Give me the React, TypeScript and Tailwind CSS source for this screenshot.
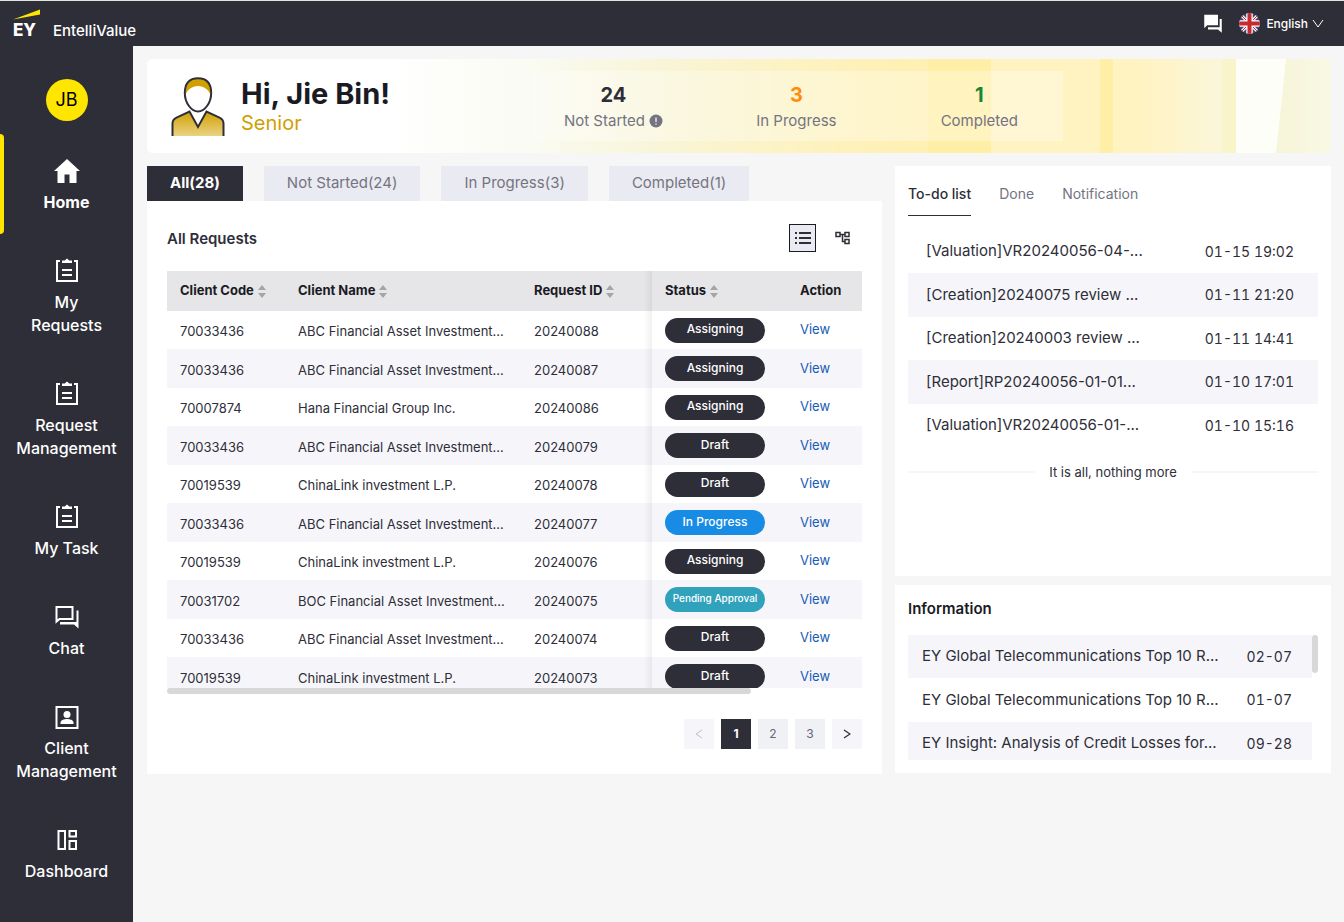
import React from "react";

type IconProps = { className?: string };

const HomeIcon = ({ className }: IconProps) => (
  <svg viewBox="0 0 26 26" className={className} fill="currentColor" aria-hidden="true">
    <path d="M13 1 26 13h-3.500v12h-7v-8.500h-5V25h-7V13H0z" />
  </svg>
);

const ClipboardIcon = ({ className }: IconProps) => (
  <svg viewBox="0 0 26 26" className={className} fill="none" stroke="currentColor" strokeWidth="2" aria-hidden="true">
    <path d="M6 3H3v20h20V3h-3" />
    <path d="M8 5V2.500h2.700L13 .5l2.300 2H18V5z" fill="currentColor" stroke="none" />
    <path d="M8 12h10M8 17h10" />
  </svg>
);

const ChatOutlineIcon = ({ className }: IconProps) => (
  <svg viewBox="0 0 26 26" className={className} fill="none" stroke="currentColor" strokeWidth="2" aria-hidden="true">
    <path d="M2.500 3h16v12H5.500l-3 2.500z" />
    <path d="M22.500 6.500h2V24.500l-4.500-4H6v-2.500h16.500z" fill="currentColor" stroke="none" />
  </svg>
);

const ClientIcon = ({ className }: IconProps) => (
  <svg viewBox="0 0 26 26" className={className} fill="none" stroke="currentColor" strokeWidth="2" aria-hidden="true">
    <path d="M2.500 3h21v21h-21z" />
    <circle cx="13" cy="10.500" r="3.500" fill="currentColor" stroke="none" />
    <path d="M6.500 20v-1.500c0-2.500 4-3.500 6.500-3.500s6.500 1 6.500 3.500V20z" fill="currentColor" stroke="none" />
  </svg>
);

const DashboardIcon = ({ className }: IconProps) => (
  <svg viewBox="0 0 26 26" className={className} fill="none" stroke="currentColor" strokeWidth="2" aria-hidden="true">
    <path d="M4.500 4h6.500v18H4.500zM15.500 4H22v5.500h-6.500zM15.500 14H22v8h-6.500z" />
  </svg>
);

const ChatSolidIcon = ({ className }: IconProps) => (
  <svg viewBox="0 0 24 24" className={className} fill="currentColor" aria-hidden="true">
    <path d="M22.500 6H20v10H6v2.500h12l4.500 4zM18 1H1.500v16L5 13.500h13z" />
  </svg>
);

const FlagIcon = ({ className }: IconProps) => (
  <svg viewBox="0 0 42 42" className={className} aria-hidden="true">
    <clipPath id="flag-round">
      <circle cx="21" cy="21" r="21" />
    </clipPath>
    <g clipPath="url(#flag-round)">
      <path d="M0 0h42v42H0z" fill="#3f4a80" />
      <path d="m0 0 42 42M42 0 0 42" stroke="#fff" strokeWidth="6" />
      <path d="m0 0 42 42M42 0 0 42" stroke="#c9282d" strokeWidth="2" />
      <path d="M21 0v42M0 21h42" stroke="#fff" strokeWidth="13" />
      <path d="M21 0v42M0 21h42" stroke="#c9282d" strokeWidth="8" />
    </g>
  </svg>
);

const PersonIcon = ({ className }: IconProps) => (
  <svg viewBox="0 0 54 60" className={className} aria-hidden="true">
    <defs>
      <linearGradient id="suit" x1="0" y1="0" x2="0" y2="1">
        <stop offset="0" stopColor="#d0a000" />
        <stop offset="1" stopColor="#ead284" />
      </linearGradient>
    </defs>
    <path d="M1.500 59V46.500c0-3 1.500-4.700 4-5.900L18.500 34.500 27 50l8.500-15.500 13 6.100c2.500 1.200 4 2.900 4 5.900V59" fill="url(#suit)" stroke="#2e2e38" strokeWidth="2" />
    <path d="M27 1.200c8.500 0 13.200 5 13.200 14.800C40.200 26 33.500 34.500 27 34.500S13.800 26 13.800 16C13.800 6.200 18.500 1.200 27 1.200z" fill="#fff" />
    <path d="M14.500 18C14 6.500 18.500 1.500 27 1.500S40 6.500 39.500 18C37.500 12.500 33 9 27 9s-10.500 3.500-12.500 9z" fill="#d0a000" />
    <path d="M27 1.200c8.500 0 13.200 5 13.200 14.800C40.200 26 33.500 34.500 27 34.500S13.800 26 13.800 16C13.800 6.200 18.500 1.200 27 1.200z" fill="none" stroke="#2e2e38" strokeWidth="2" />
  </svg>
);

const BannerArt = () => (
  <svg viewBox="0 0 1184 94" preserveAspectRatio="none" className="absolute inset-0 size-full" aria-hidden="true">
    <defs>
      <linearGradient id="wash" x1="0" x2="1" y1="0" y2="0">
        <stop offset="0" stopColor="#ffffff" />
        <stop offset="0.2" stopColor="#ffffff" />
        <stop offset="0.32" stopColor="#fafbf3" />
        <stop offset="0.43" stopColor="#f8f5d8" />
        <stop offset="0.5" stopColor="#fbf3ca" />
        <stop offset="0.6" stopColor="#fef1b9" />
        <stop offset="0.66" stopColor="#fff0b2" />
      </linearGradient>
      <linearGradient id="fade" x1="0" x2="1" y1="0" y2="0">
        <stop offset="0" stopColor="#fff3c2" />
        <stop offset="0.25" stopColor="#fff3c2" />
        <stop offset="1" stopColor="#faf6da" />
      </linearGradient>
      <linearGradient id="tail" x1="0" x2="1" y1="0" y2="0">
        <stop offset="0" stopColor="#f6f5d8" />
        <stop offset="1" stopColor="#f9f8e4" />
      </linearGradient>
    </defs>
    <path d="M0 0h1184v94H0z" fill="url(#wash)" />
    <path d="M781 0h63v94h-63z" fill="#ffeea5" />
    <path d="M844 0h109v94H844z" fill="#fff3c2" />
    <path d="M953 0h13v94h-13z" fill="#ffeea5" />
    <path d="M966 0h110v94H966z" fill="url(#fade)" />
    <path d="M1075 0h15v94h-15z" fill="#faf4ca" />
    <path d="M1089 0h60v94h-60z" fill="#fefef8" />
    <path d="M1139 0h45v94h-55z" fill="url(#tail)" />
  </svg>
);

const SortIcon = () => (
  <svg viewBox="0 0 8 13" className="h-[13px] w-2 shrink-0" fill="#a5a5a8" aria-hidden="true">
    <path d="M4 0 8 5H0zM4 13 0 8h8z" />
  </svg>
);

const navItems = [
  { label: "Home", Icon: HomeIcon, active: true },
  { label: "My\nRequests", Icon: ClipboardIcon },
  { label: "Request\nManagement", Icon: ClipboardIcon },
  { label: "My Task", Icon: ClipboardIcon },
  { label: "Chat", Icon: ChatOutlineIcon },
  { label: "Client\nManagement", Icon: ClientIcon },
  { label: "Dashboard", Icon: DashboardIcon },
];

const tabs = ["All(28)", "Not Started(24)", "In Progress(3)", "Completed(1)"];

const abc = "ABC Financial Asset Investment...";
const chinaLink = "ChinaLink investment L.P.";

const requests = [
  ["70033436", abc, "20240088", "Assigning"],
  ["70033436", abc, "20240087", "Assigning"],
  ["70007874", "Hana Financial Group Inc.", "20240086", "Assigning"],
  ["70033436", abc, "20240079", "Draft"],
  ["70019539", chinaLink, "20240078", "Draft"],
  ["70033436", abc, "20240077", "In Progress"],
  ["70019539", chinaLink, "20240076", "Assigning"],
  ["70031702", "BOC Financial Asset Investment...", "20240075", "Pending Approval"],
  ["70033436", abc, "20240074", "Draft"],
  ["70019539", chinaLink, "20240073", "Draft"],
];

const statusStyle: Record<string, string> = {
  Assigning: "bg-[#2e2e38] text-xs",
  Draft: "bg-[#2e2e38] text-xs",
  "In Progress": "bg-[#188ce5] text-xs",
  "Pending Approval": "bg-[#30a2bc] text-[10px]",
};

const todos = [
  ["[Valuation]VR20240056-04-...", "01-15 19:02"],
  ["[Creation]20240075 review ...", "01-11 21:20"],
  ["[Creation]20240003 review ...", "01-11 14:41"],
  ["[Report]RP20240056-01-01...", "01-10 17:01"],
  ["[Valuation]VR20240056-01-...", "01-10 15:16"],
];

const news = [
  ["EY Global Telecommunications Top 10 R...", "02-07"],
  ["EY Global Telecommunications Top 10 R...", "01-07"],
  ["EY Insight: Analysis of Credit Losses for...", "09-28"],
];

function Header() {
  return (
    <header className="flex h-[46px] items-center justify-between border-t border-[#dfe6e0] bg-[#2e2e38] pr-5 pl-[13px] text-white">
      <div className="flex items-end gap-3">
        <div className="flex w-7 flex-col">
          <svg viewBox="0 0 28 11" className="h-[11px] w-7" aria-hidden="true">
            <path d="M0 10.500 27 .5v5z" fill="#ffe600" />
          </svg>
          <span className="pt-px text-[17px] leading-[18px] font-extrabold">EY</span>
        </div>
        <span className="text-[15px] leading-[17px] font-medium">EntelliValue</span>
      </div>
      <div className="flex items-center">
        <button type="button" aria-label="Messages" className="mr-4">
          <ChatSolidIcon className="size-5" />
        </button>
        <FlagIcon className="size-[21px]" />
        <button type="button" className="ml-1.5 flex items-center gap-1 text-xs font-medium">
          English
          <svg viewBox="0 0 12 12" className="size-3" fill="none" stroke="currentColor" aria-hidden="true">
            <path d="m1 2 5 7 5-7" />
          </svg>
        </button>
      </div>
    </header>
  );
}

function Sidebar() {
  return (
    <aside className="flex w-[133px] shrink-0 flex-col items-center bg-[#2e2e38] pt-[33px] text-white">
      <div className="mb-[13px] flex size-[42px] items-center justify-center rounded-full bg-[#ffe600] text-lg text-black">JB</div>
      <nav className="w-full">
        {navItems.map(({ label, Icon, active }) => (
          <a
            key={label}
            href="#"
            className={`relative flex flex-col items-center px-2 pt-6 pb-5 text-center text-base leading-[23px] whitespace-pre-line ${active ? "font-bold" : "font-medium"}`}
          >
            {active && <span className="absolute inset-y-0 left-0 w-1 rounded-r-sm bg-[#ffe600]" />}
            <Icon className="mb-[7px] size-[26px]" />
            {label}
          </a>
        ))}
      </nav>
    </aside>
  );
}

function Banner() {
  const stats = [
    { value: "24", label: "Not Started", color: "text-[#2e2e38]", info: true },
    { value: "3", label: "In Progress", color: "text-[#ff8c0a]" },
    { value: "1", label: "Completed", color: "text-[#168736]" },
  ];
  return (
    <section className="relative flex h-[94px] overflow-hidden rounded-md bg-white">
      <BannerArt />
      <div className="relative flex w-[383px] items-center gap-4 pt-0.5 pl-6">
        <PersonIcon className="h-[60px] w-[54px]" />
        <div className="pt-0.5">
          <h1 className="text-[29px] leading-[30px] font-bold text-[#1a1a24]">Hi, Jie Bin!</h1>
          <p className="text-xl leading-[28px] text-[#d0a000]">Senior</p>
        </div>
      </div>
      <div className="relative my-3 w-[45%] bg-white/30">
        <div className="-mx-2 grid h-full grid-cols-3 pt-[11px] text-center">
          {stats.map((s) => (
            <div key={s.label}>
              <div className={`text-xl leading-[26px] font-bold ${s.color}`}>{s.value}</div>
              <div className="flex items-center justify-center gap-1 text-[15px] leading-[26px] text-[#747480]">
                {s.label}
                {s.info && (
                  <svg viewBox="0 0 14 14" className="size-3.5" aria-hidden="true">
                    <circle cx="7" cy="7" r="6.500" fill="#747480" />
                    <path d="M7 3.500v4.500M7 9.500v1.300" stroke="#f4f4ee" strokeWidth="1.300" />
                  </svg>
                )}
              </div>
            </div>
          ))}
        </div>
      </div>
    </section>
  );
}

const headCell = "text-left text-[13px] font-bold";

function SortHead({ children }: { children: React.ReactNode }) {
  return (
    <button type="button" className="flex items-center gap-1 whitespace-nowrap">
      {children}
      <SortIcon />
    </button>
  );
}

const fixedEdge =
  "relative pl-[13px] before:absolute before:inset-y-0 before:-left-2 before:w-2 before:bg-linear-to-l before:from-black/6 before:to-transparent";

function Requests() {
  return (
    <section>
      <div className="flex gap-[21px]">
        {tabs.map((t, i) => (
          <button
            key={t}
            type="button"
            className={`h-[35px] px-[23px] text-[15px] ${i === 0 ? "bg-[#2e2e38] font-bold text-white" : "bg-[#eaeaf2] text-[#747480]"}`}
          >
            {t}
          </button>
        ))}
      </div>
      <div className="bg-white px-5 pt-[23px] pb-[25px]">
        <div className="mb-[19px] flex items-center justify-between">
          <h2 className="pt-0.5 text-[15px] font-semibold text-[#2e2e38]">All Requests</h2>
          <div className="flex items-center gap-[19px] pr-3">
            <button type="button" aria-label="List view" className="flex h-7 w-[27px] items-center justify-center border border-[#1a1a24] bg-[#eaeaf2]">
              <svg viewBox="0 0 16 14" className="h-3.5 w-4" fill="none" stroke="#2e2e38" strokeWidth="2" aria-hidden="true">
                <path d="M0 2h2M4 2h12M0 7h2M4 7h12M0 12h2M4 12h12" />
              </svg>
            </button>
            <button type="button" aria-label="Tree view">
              <svg viewBox="0 0 15 14" className="h-3.5 w-[15px]" fill="none" stroke="#2e2e38" strokeWidth="1.500" aria-hidden="true">
                <path d="M1 1.500h4v4H1zM10 1.500h4v4h-4zM10 8.500h4v4h-4zM5 3.500h5M7.500 3.500v7H10" />
              </svg>
            </button>
          </div>
        </div>
        <div className="h-[417px] overflow-hidden">
          <table className="w-full table-fixed border-collapse text-[13px] text-[#2e2e38]">
            <colgroup>
              <col className="w-[118px]" />
              <col />
              <col className="w-[131px]" />
              <col className="w-[135px]" />
              <col className="w-[75px]" />
            </colgroup>
            <thead>
              <tr className="h-10 bg-[#e6e6e8] text-[#1a1a24]">
                <th className={`${headCell} pl-[13px]`}><SortHead>Client Code</SortHead></th>
                <th className={`${headCell} pl-[13px]`}><SortHead>Client Name</SortHead></th>
                <th className={`${headCell} pl-[13px]`}><SortHead>Request ID</SortHead></th>
                <th className={`${headCell} ${fixedEdge}`}><SortHead>Status</SortHead></th>
                <th className={`${headCell} pl-[13px]`}>Action</th>
              </tr>
            </thead>
            <tbody>
              {requests.map(([code, name, id, status]) => (
                <tr key={id} className="h-[38px] even:h-[39px] even:bg-[#f6f6fa]">
                  <td className="pt-1 pl-[13px]">{code}</td>
                  <td className="truncate pt-1 pl-[13px]">{name}</td>
                  <td className="pt-1 pl-[13px]">{id}</td>
                  <td className={fixedEdge}>
                    <span className={`flex h-[25px] w-[100px] items-center justify-center rounded-full pb-0.5 font-medium whitespace-nowrap text-white ${statusStyle[status]}`}>
                      {status}
                    </span>
                  </td>
                  <td className="pl-[13px]">
                    <a href="#" className="text-[#155cb4]">View</a>
                  </td>
                </tr>
              ))}
            </tbody>
          </table>
        </div>
        <div className="h-1.5">
          <div className="h-full w-[84%] rounded-full bg-[#d8d8d8]" />
        </div>
        <nav aria-label="Pages" className="mt-[25px] flex justify-end gap-[7px] text-xs text-[#656579]">
          <button type="button" aria-label="Previous page" className="flex size-[30px] items-center justify-center bg-[#f6f6fa]">
            <svg viewBox="0 0 8 10" className="h-2.5 w-2" fill="none" stroke="#c0c0c4" aria-hidden="true">
              <path d="M7 1 1 5l6 4" />
            </svg>
          </button>
          <button type="button" className="size-[30px] bg-[#2e2e38] font-bold text-white">1</button>
          <button type="button" className="size-[30px] bg-[#f0f1f5]">2</button>
          <button type="button" className="size-[30px] bg-[#f0f1f5]">3</button>
          <button type="button" aria-label="Next page" className="flex size-[30px] items-center justify-center bg-[#f6f6fa]">
            <svg viewBox="0 0 8 10" className="h-2.5 w-2" fill="none" stroke="#2e2e38" strokeWidth="1.300" aria-hidden="true">
              <path d="m1 1 6 4-6 4" />
            </svg>
          </button>
        </nav>
      </div>
    </section>
  );
}

function SidePanels() {
  return (
    <div className="flex flex-col gap-[9px]">
      <section className="h-[410px] bg-white px-[13px]">
        <div className="mb-3.5 flex gap-7 text-sm text-[#747480]">
          <button type="button" className="h-[50px] border-b border-[#2e2e38] pt-1.5 font-medium text-[#2e2e38]">To-do list</button>
          <button type="button" className="h-[50px] border-b border-transparent pt-1.5">Done</button>
          <button type="button" className="h-[50px] border-b border-transparent pt-1.5">Notification</button>
        </div>
        <ul className="text-[15px] text-[#2e2e38]">
          {todos.map(([title, time]) => (
            <li key={title} className="flex h-[43px] items-center justify-between pr-6 pl-[18px] even:h-11 even:bg-[#f6f6fa]">
              <a href="#">{title}</a>
              <time className="text-sm tabular-nums">{time}</time>
            </li>
          ))}
        </ul>
        <div className="mt-[15px] flex items-center gap-3.5 text-[13px] leading-5 text-[#2e2e38]">
          <span className="h-0.5 flex-1 bg-[#f6f6f6]" />
          It is all, nothing more
          <span className="h-0.5 flex-1 bg-[#f6f6f6]" />
        </div>
      </section>
      <section className="bg-white px-[13px] pt-3 pb-[13px]">
        <h2 className="mb-[14px] text-[15px] leading-6 font-semibold text-[#1a1a24]">Information</h2>
        <div className="flex h-[125px] overflow-hidden">
          <ul className="flex-1 text-[15px] text-[#2e2e38]">
            {news.map(([title, date]) => (
              <li key={date} className="flex h-11 items-center justify-between pr-5 pl-3.5 whitespace-nowrap odd:h-[43px] odd:bg-[#f6f6fa]">
                <a href="#">{title}</a>
                <time className="text-sm tabular-nums">{date}</time>
              </li>
            ))}
          </ul>
          <div className="h-[38px] w-1.5 rounded-sm bg-[#d8d8d8]" />
        </div>
      </section>
    </div>
  );
}

export default function App() {
  return (
    <div className="flex min-h-screen flex-col bg-[#f6f6f6] font-['Inter','Liberation_Sans',sans-serif]">
      <Header />
      <div className="flex flex-1">
        <Sidebar />
        <main className="flex min-w-0 flex-1 flex-col gap-[13px] pt-[13px] pr-[13px] pb-4 pl-3.5">
          <Banner />
          <div className="grid grid-cols-[735fr_436fr] items-start gap-[13px]">
            <Requests />
            <SidePanels />
          </div>
        </main>
      </div>
    </div>
  );
}
